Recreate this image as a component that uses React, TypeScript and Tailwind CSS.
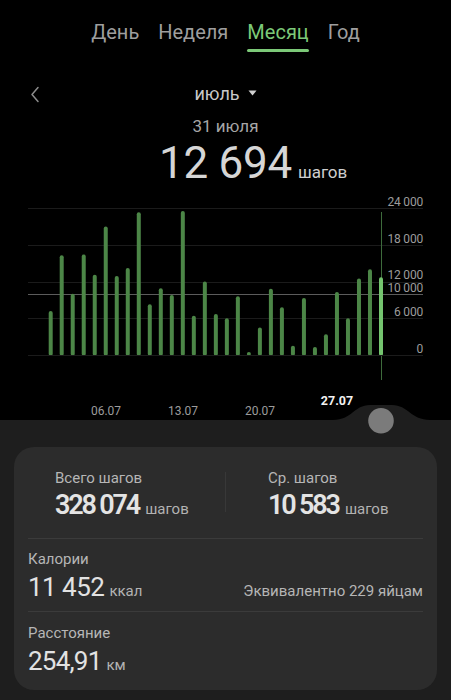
import React from 'react';

const steps = [
  7200, 16300, 10000, 16400, 13100, 21000, 12900, 14200, 23300, 8300, 10900,
  9800, 23500, 6400, 12000, 6700, 6000, 9600, 300, 4500, 10800, 7800, 1500,
  9300, 1300, 3400, 10300, 6000, 12500, 14000, 12694,
];

const BASE = 165;
const SCALE = 147 / 24000;

const yLabels = [
  { v: '24 000', y: 18 },
  { v: '18 000', y: 55 },
  { v: '12 000', y: 92 },
  { v: '10 000', y: 104 },
  { v: '6 000', y: 128 },
  { v: '0', y: 165 },
];

const dates = [
  { t: '06.07', x: 106 },
  { t: '13.07', x: 183 },
  { t: '20.07', x: 260 },
];

const StepsChart = () => (
  <svg width="451" height="230" viewBox="0 0 451 230" className="block">
    {yLabels.map((l) => (
      <line
        key={l.v}
        x1="28"
        x2="423"
        y1={l.y + 0.5}
        y2={l.y + 0.5}
        stroke={l.v === '10 000' ? '#5c5c5c' : '#1b1b1b'}
        strokeWidth="1"
      />
    ))}
    {yLabels.map((l) => (
      <text
        key={l.v + 't'}
        x="423"
        y={l.v === '12 000' ? l.y - 3 : l.y - 2}
        textAnchor="end"
        fontSize="12"
        fill="#9c9c9c"
        letterSpacing="-0.2"
        fontFamily="Roboto, sans-serif"
      >
        {l.v}
      </text>
    ))}
    <line x1="381.5" x2="381.5" y1="22" y2="190" stroke="#3e6b3c" strokeWidth="1" />
    {steps.map((v, i) => {
      const h = Math.max(3, v * SCALE);
      const cx = 50.7 + i * 11.01;
      const last = i === steps.length - 1;
      return (
        <rect
          key={i}
          x={cx - 2}
          y={BASE - h}
          width="4"
          height={h + 1}
          rx="2"
          fill={last ? '#74c46f' : '#4c8647'}
        />
      );
    })}
    <rect x="28" y={BASE} width="395" height="1" fill="#1b1b1b" />
    {dates.map((d) => (
      <text
        key={d.t}
        x={d.x}
        y="225"
        textAnchor="middle"
        fontSize="12"
        fill="#9c9c9c"
        fontFamily="Roboto, sans-serif"
      >
        {d.t}
      </text>
    ))}
    <text
      x="337"
      y="215"
      textAnchor="middle"
      fontSize="12.5"
      fontWeight="700"
      fill="#f2f2f2"
      fontFamily="Roboto, sans-serif"
    >
      27.07
    </text>
  </svg>
);

const tabs = ['День', 'Неделя', 'Месяц', 'Год'];

export default function App() {
  return (
    <div className="w-[451px] h-[700px] bg-black overflow-hidden font-[Roboto,sans-serif] flex flex-col">
      {/* tabs */}
      <div className="h-[84px] pt-[20px] flex justify-center gap-[19px]">
        {tabs.map((t) => (
          <div key={t} className="flex flex-col items-center">
            <span
              className={`text-[20px] leading-6 ${t === 'Месяц' ? 'text-[#7cc978]' : 'text-[#9e9e9e]'}`}
            >
              {t}
            </span>
            {t === 'Месяц' && (
              <span className="mt-[5px] h-[2.5px] w-full bg-[#7cc978] rounded-full" />
            )}
          </div>
        ))}
      </div>

      {/* month selector */}
      <div className="h-[20px] grid grid-cols-[1fr_auto_1fr] items-center">
        <div className="pl-[30px] flex items-center">
          <svg width="10" height="17" viewBox="0 0 10 17">
            <path d="M8 1.5L2 8.5L8 15.5" fill="none" stroke="#8c8c8c" strokeWidth="1.5" strokeLinecap="round" strokeLinejoin="round" />
          </svg>
        </div>
        <div className="flex items-center gap-[8px] text-[18px] leading-5 text-[#c9c9c9]">
          <span>июль</span>
          <svg width="9" height="6" viewBox="0 0 9 6" className="mt-[-3px]">
            <path d="M0.5 0.5H8.5L4.5 5.5Z" fill="#d0d0d0" />
          </svg>
        </div>
        <div />
      </div>

      <div className="mt-[12px] text-center text-[17px] leading-5 text-[#a6a6a6]">31 июля</div>

      <div className="mt-[3px] grid grid-cols-[1fr_auto_1fr] items-baseline">
        <div />
        <span className="text-[44px] leading-[48px] text-[#d6d6d6] tracking-[-0.3px]">12 694</span>
        <span className="pl-[6px] text-[17px] text-[#cfcfcf]">шагов</span>
      </div>

      <div className="mt-[3px]">
        <StepsChart />
      </div>

      {/* bottom */}
      <div className="relative flex-1 bg-[#1e1e1e] pt-[27px]">
        <svg width="451" height="36" viewBox="0 0 451 36" className="absolute left-0 top-[-20px]">
          <path d="M333 20 C352 20 354 5 370 5 L392 5 C408 5 411 20 430 20 Z" fill="#1e1e1e" />
          <circle cx="381" cy="20.7" r="12.8" fill="#7b7b7b" />
        </svg>

        <div className="mx-[14px] h-[243px] rounded-[20px] bg-[#2c2c2c]">
          <div className="grid grid-cols-[1fr_1px_1fr] pt-[21px] pb-[16px]">
            <div className="pl-[41px]">
              <div className="text-[15px] leading-5 text-[#b6b6b6]">Всего шагов</div>
              <div className="flex items-baseline gap-[6px]">
                <span className="text-[27px] leading-[34px] font-semibold tracking-[-0.08em] text-[#e4e4e4]">328 074</span>
                <span className="text-[15px] text-[#b3b3b3]">шагов</span>
              </div>
            </div>
            <div className="mt-[4px] h-[40px] bg-[#383838]" />
            <div className="pl-[42px]">
              <div className="text-[15px] leading-5 text-[#b6b6b6]">Ср. шагов</div>
              <div className="flex items-baseline gap-[6px]">
                <span className="text-[27px] leading-[34px] font-semibold tracking-[-0.08em] text-[#e4e4e4]">10 583</span>
                <span className="text-[15px] text-[#b3b3b3]">шагов</span>
              </div>
            </div>
          </div>

          <div className="mx-[14px] h-px bg-[#3b3b3b]" />

          <div className="px-[14px] pt-[10px] pb-[8px]">
            <div className="text-[15px] leading-5 text-[#b6b6b6]">Калории</div>
            <div className="mt-[2px] flex items-baseline justify-between">
              <div className="flex items-baseline gap-[5px]">
                <span className="text-[26px] leading-[32px] tracking-[-0.02em] text-[#e2e2e2]">11 452</span>
                <span className="text-[15px] text-[#b3b3b3]">ккал</span>
              </div>
              <span className="text-[15px] text-[#b6b6b6]">Эквивалентно 229 яйцам</span>
            </div>
          </div>

          <div className="mx-[14px] h-px bg-[#3b3b3b]" />

          <div className="px-[14px] pt-[11px]">
            <div className="text-[15px] leading-5 text-[#b6b6b6]">Расстояние</div>
            <div className="mt-[2px] flex items-baseline gap-[5px]">
              <span className="text-[26px] leading-[32px] tracking-[-0.03em] text-[#e2e2e2]">254,91</span>
              <span className="text-[15px] text-[#b3b3b3]">км</span>
            </div>
          </div>
        </div>
      </div>
    </div>
  );
}
